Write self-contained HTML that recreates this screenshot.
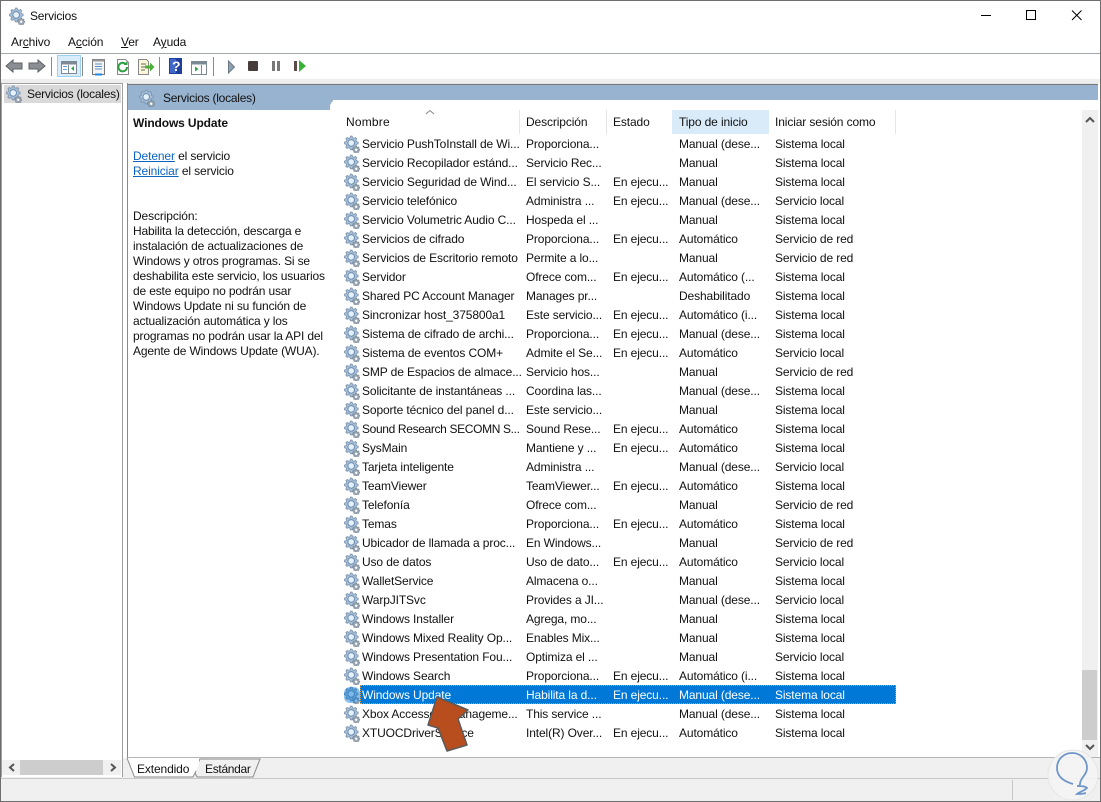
<!DOCTYPE html>
<html><head><meta charset="utf-8"><style>
html,body{margin:0;padding:0;background:#fff}
#w{position:relative;width:1101px;height:802px;overflow:hidden;background:#fff;font:12px "Liberation Sans",sans-serif;color:#111;letter-spacing:-.12px}
#w div{position:absolute}
.t{white-space:nowrap;line-height:16px}
.r{position:absolute;left:0;width:1101px;height:19px}
.r span{position:absolute;top:1px;line-height:16px;white-space:nowrap}
.r svg{position:absolute;left:343px;top:0}
.n{left:362px}.d{left:526px}.e{left:613px}.s{left:679px}.l{left:775px}
u{text-decoration:underline}
</style></head><body><div id="w">
<svg width="0" height="0" style="position:absolute"><defs>
<g id="g">
<path d="M7.5 1l1.600.1.500 1.600 1.400.6 1.500-.8 1.200 1.200-.8 1.500.6 1.400 1.600.5v1.700l-1.600.5-.6 1.400.8 1.500-1.200 1.200-1.500-.8-1.400.6-.5 1.600H7.400l-.5-1.600-1.400-.6-1.500.8-1.200-1.200.8-1.500-.6-1.400L1.500 8.800V7.100l1.600-.5.6-1.400-.8-1.500 1.200-1.200 1.500.8 1.400-.6z" fill="#a9c0d8" stroke="#7a93ad" stroke-width=".8"/>
<circle cx="8.200" cy="7.900" r="3.300" fill="#e4f0fa" stroke="#6b8cae" stroke-width="1"/>
<path d="M13 11l.8.2.3.8.8.2.6-.4.7.7-.4.6.2.8.8.3v1l-.8.3-.2.8.4.6-.7.7-.6-.4-.8.2-.3.8h-1l-.3-.8-.8-.2-.6.4-.7-.7.4-.6-.2-.8-.8-.3v-1l.8-.3.2-.8-.4-.6.7-.7.6.4.8-.2z" fill="#98a5b2" stroke="#6a7682" stroke-width=".5"/>
<circle cx="13.200" cy="14.800" r="1.200" fill="#fff"/>
</g>
</defs></svg>

<!-- window border -->
<div style="left:0;top:0;width:1101px;height:1px;background:#6e6e6e"></div>
<div style="left:0;top:0;width:1px;height:802px;background:#6e6e6e"></div>
<div style="left:1100px;top:0;width:1px;height:802px;background:#6e6e6e"></div>
<div style="left:0;top:801px;width:1101px;height:1px;background:#6e6e6e"></div>

<!-- title -->
<svg style="position:absolute;left:8px;top:7px" width="18" height="18"><use href="#g"/></svg>
<div class="t" style="left:30px;top:8px;letter-spacing:-.2px">Servicios</div>
<svg style="position:absolute;left:980px;top:8px" width="110" height="16" fill="none" stroke="#000">
<path d="M1 7.500H11" stroke-width="1"/>
<rect x="46.500" y="2.500" width="9" height="9" stroke-width="1"/>
<path d="M92 2.500l9.500 9.500M101.500 2.500L92 12" stroke-width="1"/>
</svg>

<!-- menu -->
<div class="t" style="left:11px;top:34px">Ar<u>c</u>hivo</div>
<div class="t" style="left:68px;top:34px">A<u>c</u>ción</div>
<div class="t" style="left:121px;top:34px"><u>V</u>er</div>
<div class="t" style="left:153px;top:34px">A<u>y</u>uda</div>
<div style="left:1px;top:53px;width:1099px;height:1px;background:#a0a8b0"></div>

<!-- toolbar -->
<div style="left:1px;top:79px;width:1099px;height:4px;background:#eeeeee"></div>
<div style="left:57px;top:55px;width:22px;height:20px;background:#d9ecf9;border:1px solid #9fd0f2"></div>
<svg style="position:absolute;left:0;top:54px" width="320" height="25">
<path d="M6 12l7-6v3h9v6h-9v3z" fill="#8b8f93" stroke="#5e6266"/>
<path d="M45 12l-7-6v3h-9v6h9v3z" fill="#8b8f93" stroke="#5e6266"/>
<path d="M51.500 3v19M82.500 3v19M159.500 3v19M213.500 3v19" stroke="#8a8a8a" fill="none"/>
<rect x="61.500" y="7.500" width="15" height="12" fill="#fff" stroke="#7d8a96"/><path d="M62 8h14v2.500H62z" fill="#7d8a96"/><path d="M68.500 11v8" stroke="#7d8a96"/><path d="M74 12v5l-3-2.500z" fill="#2aa84a"/><path d="M63 12h4v1h-4zM63 15h4v1h-4z" fill="#6aa5d8"/>
<rect x="92.500" y="5.500" width="12" height="15" fill="#f4f4f4" stroke="#777"/><path d="M92.500 5.500h12v2h-12z" fill="#999"/><path d="M95 10h7M95 12.500h7M95 15h7" stroke="#5b8fc5"/><path d="M95 20.500h7" stroke="#1e88e5" stroke-width="2"/>
<path d="M117.500 5.500h8l3 3v12h-11z" fill="#fff" stroke="#888"/><path d="M127 13a4.300 4.300 0 1 1-1.500-3.200" fill="none" stroke="#2f9e44" stroke-width="2"/><path d="M127.500 7v4h-4z" fill="#2f9e44"/>
<path d="M138.500 5.500h8l2 2v13h-10z" fill="#fbf6d8" stroke="#888"/><path d="M141 10h5M141 13h5M141 16h4" stroke="#666"/><path d="M145 11.500h5v-3l4.500 4.500-4.500 4.500v-3h-5z" fill="#4caf3a"/>
<rect x="169" y="4" width="13" height="16" fill="#1f3f9c"/><rect x="170" y="5" width="6" height="14" fill="#3f66c8"/><text x="172" y="17" font-family="Liberation Sans" font-weight="bold" font-size="14" fill="#fff">?</text>
<rect x="191.500" y="7.500" width="15" height="13" fill="#fff" stroke="#7d8a96"/><path d="M192 8h14v2.500h-14z" fill="#7d8a96"/><path d="M201.500 11v9" stroke="#7d8a96"/><path d="M195 12.500v5l3.500-2.500z" fill="#2aa84a"/>
<path d="M228.500 7l6 6-6 6z" fill="#8fa0b0" stroke="#6a7a8a"/>
<rect x="248" y="7" width="10" height="10" rx="1" fill="#483d3d"/>
<rect x="272" y="7" width="3" height="10" fill="#777"/><rect x="277" y="7" width="3" height="10" fill="#777"/>
<rect x="294" y="7" width="3" height="10" fill="#5a4a4a"/><path d="M299 6l7 6-7 6z" fill="#36b336"/>
</svg>

<!-- left tree pane -->
<div style="left:1px;top:83px;width:120px;height:693px;border:1px solid #a0a0a0;background:#fff"></div>
<div style="left:4px;top:85px;width:117px;height:18px;background:#d9d9d9"></div>
<svg style="position:absolute;left:5px;top:85px" width="18" height="18"><use href="#g"/></svg>
<div class="t" style="left:27px;top:86px;letter-spacing:-.25px">Servicios (locales)</div>
<div style="left:2px;top:760px;width:119px;height:15px;background:#f0f0f0"></div>
<div style="left:20px;top:760px;width:83px;height:15px;background:#cdcdcd"></div>
<svg style="position:absolute;left:3px;top:760px" width="118" height="15" fill="none" stroke="#555" stroke-width="2"><path d="M11 4l-4 3.500 4 3.500M108 4l4 3.500-4 3.500"/></svg>

<!-- right pane -->
<div style="left:127px;top:83px;width:972px;height:674px;background:#fff;border-left:1px solid #8a8a8a;border-bottom:1px solid #b5b5b5"></div>
<div style="left:128px;top:83px;width:970px;height:1px;background:#e4e4e4"></div>
<div style="left:128px;top:84px;width:970px;height:1px;background:#777"></div>
<div style="left:128px;top:85px;width:970px;height:15px;background:#97b3d0"></div>
<div style="left:128px;top:100px;width:205px;height:10px;background:#97b3d0"></div>
<div style="left:330px;top:100px;width:10px;height:10px;background:#fff;border-radius:7px 0 0 0"></div>
<svg style="position:absolute;left:138px;top:89px" width="18" height="18"><use href="#g"/></svg>
<div class="t" style="left:163px;top:90px;letter-spacing:-.25px">Servicios (locales)</div>

<!-- description pane -->
<div class="t" style="left:133px;top:115px;font-weight:bold">Windows Update</div>
<div class="t" style="left:133px;top:148px"><u style="color:#0b64c0">Detener</u> el servicio</div>
<div class="t" style="left:133px;top:163px"><u style="color:#0b64c0">Reiniciar</u> el servicio</div>
<div class="t" style="left:133px;top:208px">Descripción:</div>
<div class="t" style="left:133px;top:223px;line-height:15px;letter-spacing:-.16px;margin-top:1px">Habilita la detección, descarga e<br>instalación de actualizaciones de<br>Windows y otros programas. Si se<br>deshabilita este servicio, los usuarios<br>de este equipo no podrán usar<br>Windows Update ni su función de<br>actualización automática y los<br>programas no podrán usar la API del<br>Agente de Windows Update (WUA).</div>

<!-- list header -->
<div style="left:672px;top:110px;width:97px;height:24px;background:#d9ebf9"></div>
<div style="left:519px;top:110px;width:1px;height:24px;background:#e5e5e5"></div>
<div style="left:606px;top:110px;width:1px;height:24px;background:#e5e5e5"></div>
<div style="left:895px;top:110px;width:1px;height:24px;background:#e5e5e5"></div>
<svg style="position:absolute;left:425px;top:109px" width="12" height="7" fill="none" stroke="#888"><path d="M1 5l4-3.500L9 5"/></svg>
<div class="t" style="left:346px;top:114px;letter-spacing:.2px">Nombre</div>
<div class="t" style="left:526px;top:114px">Descripción</div>
<div class="t" style="left:613px;top:114px">Estado</div>
<div class="t" style="left:679px;top:114px">Tipo de inicio</div>
<div class="t" style="left:775px;top:114px">Iniciar sesión como</div>

<!-- rows -->
<div class="r" style="top:135px"><svg width="18" height="18"><use href="#g"/></svg><span class="n">Servicio PushToInstall de Wi...</span><span class="d">Proporciona...</span><span class="s">Manual (dese...</span><span class="l">Sistema local</span></div>
<div class="r" style="top:154px"><svg width="18" height="18"><use href="#g"/></svg><span class="n">Servicio Recopilador estánd...</span><span class="d">Servicio Rec...</span><span class="s">Manual</span><span class="l">Sistema local</span></div>
<div class="r" style="top:173px"><svg width="18" height="18"><use href="#g"/></svg><span class="n">Servicio Seguridad de Wind...</span><span class="d">El servicio S...</span><span class="e">En ejecu...</span><span class="s">Manual</span><span class="l">Sistema local</span></div>
<div class="r" style="top:192px"><svg width="18" height="18"><use href="#g"/></svg><span class="n">Servicio telefónico</span><span class="d">Administra ...</span><span class="e">En ejecu...</span><span class="s">Manual (dese...</span><span class="l">Servicio local</span></div>
<div class="r" style="top:211px"><svg width="18" height="18"><use href="#g"/></svg><span class="n">Servicio Volumetric Audio C...</span><span class="d">Hospeda el ...</span><span class="s">Manual</span><span class="l">Sistema local</span></div>
<div class="r" style="top:230px"><svg width="18" height="18"><use href="#g"/></svg><span class="n">Servicios de cifrado</span><span class="d">Proporciona...</span><span class="e">En ejecu...</span><span class="s">Automático</span><span class="l">Servicio de red</span></div>
<div class="r" style="top:249px"><svg width="18" height="18"><use href="#g"/></svg><span class="n">Servicios de Escritorio remoto</span><span class="d">Permite a lo...</span><span class="s">Manual</span><span class="l">Servicio de red</span></div>
<div class="r" style="top:268px"><svg width="18" height="18"><use href="#g"/></svg><span class="n">Servidor</span><span class="d">Ofrece com...</span><span class="e">En ejecu...</span><span class="s">Automático (...</span><span class="l">Sistema local</span></div>
<div class="r" style="top:287px"><svg width="18" height="18"><use href="#g"/></svg><span class="n">Shared PC Account Manager</span><span class="d">Manages pr...</span><span class="s">Deshabilitado</span><span class="l">Sistema local</span></div>
<div class="r" style="top:306px"><svg width="18" height="18"><use href="#g"/></svg><span class="n">Sincronizar host_375800a1</span><span class="d">Este servicio...</span><span class="e">En ejecu...</span><span class="s">Automático (i...</span><span class="l">Sistema local</span></div>
<div class="r" style="top:325px"><svg width="18" height="18"><use href="#g"/></svg><span class="n">Sistema de cifrado de archi...</span><span class="d">Proporciona...</span><span class="e">En ejecu...</span><span class="s">Manual (dese...</span><span class="l">Sistema local</span></div>
<div class="r" style="top:344px"><svg width="18" height="18"><use href="#g"/></svg><span class="n">Sistema de eventos COM+</span><span class="d">Admite el Se...</span><span class="e">En ejecu...</span><span class="s">Automático</span><span class="l">Servicio local</span></div>
<div class="r" style="top:363px"><svg width="18" height="18"><use href="#g"/></svg><span class="n">SMP de Espacios de almace...</span><span class="d">Servicio hos...</span><span class="s">Manual</span><span class="l">Servicio de red</span></div>
<div class="r" style="top:382px"><svg width="18" height="18"><use href="#g"/></svg><span class="n">Solicitante de instantáneas ...</span><span class="d">Coordina las...</span><span class="s">Manual (dese...</span><span class="l">Sistema local</span></div>
<div class="r" style="top:401px"><svg width="18" height="18"><use href="#g"/></svg><span class="n">Soporte técnico del panel d...</span><span class="d">Este servicio...</span><span class="s">Manual</span><span class="l">Sistema local</span></div>
<div class="r" style="top:420px"><svg width="18" height="18"><use href="#g"/></svg><span class="n" style="letter-spacing:-.35px">Sound Research SECOMN S...</span><span class="d">Sound Rese...</span><span class="e">En ejecu...</span><span class="s">Automático</span><span class="l">Sistema local</span></div>
<div class="r" style="top:439px"><svg width="18" height="18"><use href="#g"/></svg><span class="n">SysMain</span><span class="d">Mantiene y ...</span><span class="e">En ejecu...</span><span class="s">Automático</span><span class="l">Sistema local</span></div>
<div class="r" style="top:458px"><svg width="18" height="18"><use href="#g"/></svg><span class="n">Tarjeta inteligente</span><span class="d">Administra ...</span><span class="s">Manual (dese...</span><span class="l">Servicio local</span></div>
<div class="r" style="top:477px"><svg width="18" height="18"><use href="#g"/></svg><span class="n">TeamViewer</span><span class="d">TeamViewer...</span><span class="e">En ejecu...</span><span class="s">Automático</span><span class="l">Sistema local</span></div>
<div class="r" style="top:496px"><svg width="18" height="18"><use href="#g"/></svg><span class="n">Telefonía</span><span class="d">Ofrece com...</span><span class="s">Manual</span><span class="l">Servicio de red</span></div>
<div class="r" style="top:515px"><svg width="18" height="18"><use href="#g"/></svg><span class="n">Temas</span><span class="d">Proporciona...</span><span class="e">En ejecu...</span><span class="s">Automático</span><span class="l">Sistema local</span></div>
<div class="r" style="top:534px"><svg width="18" height="18"><use href="#g"/></svg><span class="n">Ubicador de llamada a proc...</span><span class="d">En Windows...</span><span class="s">Manual</span><span class="l">Servicio de red</span></div>
<div class="r" style="top:553px"><svg width="18" height="18"><use href="#g"/></svg><span class="n">Uso de datos</span><span class="d">Uso de dato...</span><span class="e">En ejecu...</span><span class="s">Automático</span><span class="l">Servicio local</span></div>
<div class="r" style="top:572px"><svg width="18" height="18"><use href="#g"/></svg><span class="n">WalletService</span><span class="d">Almacena o...</span><span class="s">Manual</span><span class="l">Sistema local</span></div>
<div class="r" style="top:591px"><svg width="18" height="18"><use href="#g"/></svg><span class="n">WarpJITSvc</span><span class="d">Provides a JI...</span><span class="s">Manual (dese...</span><span class="l">Servicio local</span></div>
<div class="r" style="top:610px"><svg width="18" height="18"><use href="#g"/></svg><span class="n">Windows Installer</span><span class="d">Agrega, mo...</span><span class="s">Manual</span><span class="l">Sistema local</span></div>
<div class="r" style="top:629px"><svg width="18" height="18"><use href="#g"/></svg><span class="n">Windows Mixed Reality Op...</span><span class="d">Enables Mix...</span><span class="s">Manual</span><span class="l">Sistema local</span></div>
<div class="r" style="top:648px"><svg width="18" height="18"><use href="#g"/></svg><span class="n">Windows Presentation Fou...</span><span class="d">Optimiza el ...</span><span class="s">Manual</span><span class="l">Servicio local</span></div>
<div class="r" style="top:667px"><svg width="18" height="18"><use href="#g"/></svg><span class="n">Windows Search</span><span class="d">Proporciona...</span><span class="e">En ejecu...</span><span class="s">Automático (i...</span><span class="l">Sistema local</span></div>
<div style="left:360px;top:685px;width:534px;height:17px;background:#0078d7;border:1px dotted #e8963a"></div>
<div class="r" style="top:686px;color:#fff"><svg width="18" height="18"><use href="#g"/><rect x="1" y="1" width="16" height="16" rx="6" fill="#0078d7" opacity=".45"/></svg><span class="n">Windows Update</span><span class="d">Habilita la d...</span><span class="e">En ejecu...</span><span class="s">Manual (dese...</span><span class="l">Sistema local</span></div>
<div class="r" style="top:705px"><svg width="18" height="18"><use href="#g"/></svg><span class="n">Xbox Accessory Manageme...</span><span class="d">This service ...</span><span class="s">Manual (dese...</span><span class="l">Sistema local</span></div>
<div class="r" style="top:724px"><svg width="18" height="18"><use href="#g"/></svg><span class="n">XTUOCDriverService</span><span class="d">Intel(R) Over...</span><span class="e">En ejecu...</span><span class="s">Automático</span><span class="l">Sistema local</span></div>

<!-- scrollbar -->
<div style="left:1082px;top:110px;width:16px;height:647px;background:#f0f0f0"></div>
<div style="left:1082px;top:670px;width:15px;height:70px;background:#cdcdcd"></div>
<svg style="position:absolute;left:1082px;top:110px" width="16" height="647" fill="none" stroke="#555" stroke-width="2"><path d="M4 12l4-4 4 4M4 635l4 4 4-4"/></svg>

<!-- arrow -->
<svg style="position:absolute;left:420px;top:690px" width="60" height="70"><path d="M17 7L48 20 38 29 47 55 27 61 18 38 8 35z" fill="#b84d1e" stroke="#5a5a5a" stroke-width="1.500" stroke-linejoin="round"/></svg>

<!-- tabs/status -->
<div style="left:123px;top:758px;width:977px;height:20px;background:#f0f0f0"></div>
<div style="left:1px;top:777px;width:122px;height:1px;background:#f0f0f0"></div>
<svg style="position:absolute;left:125px;top:758px" width="140" height="21">
<path d="M75 1L69 13l3 6h56l7-18z" fill="#f0f0f0" stroke="#8a8a8a"/>
<path d="M2 0l7.500 19H68l6-13V0z" fill="#fff"/>
<path d="M2 0l7.500 19H68l3-6" fill="none" stroke="#8a8a8a"/>
</svg>
<div class="t" style="left:137px;top:761px">Extendido</div>
<div class="t" style="left:205px;top:761px;letter-spacing:-.3px">Estándar</div>
<div style="left:1px;top:778px;width:1099px;height:1px;background:#c8c8c8"></div>
<div style="left:1px;top:779px;width:1099px;height:22px;background:#f0f0f0"></div>
<div style="left:1012px;top:780px;width:1px;height:20px;background:#c8c8c8"></div>

<!-- watermark -->
<svg style="position:absolute;left:1046px;top:748px" width="54" height="54"><circle cx="27" cy="27" r="25" fill="#f4f4f4" fill-opacity=".9" stroke="#e6e6e6"/><path d="M27 36C20 34 11 30 11 20C11 11 18 5 26 5C35 5 41 12 41 20C41 27 34 30 34 36C34 38 31 38 31 38C35 38 39 38 41 40C38 43 33 44 31 46C34 46 37 46 40 45" fill="none" stroke="#6f97c8" stroke-width="1.800"/></svg>
</div></body></html>
